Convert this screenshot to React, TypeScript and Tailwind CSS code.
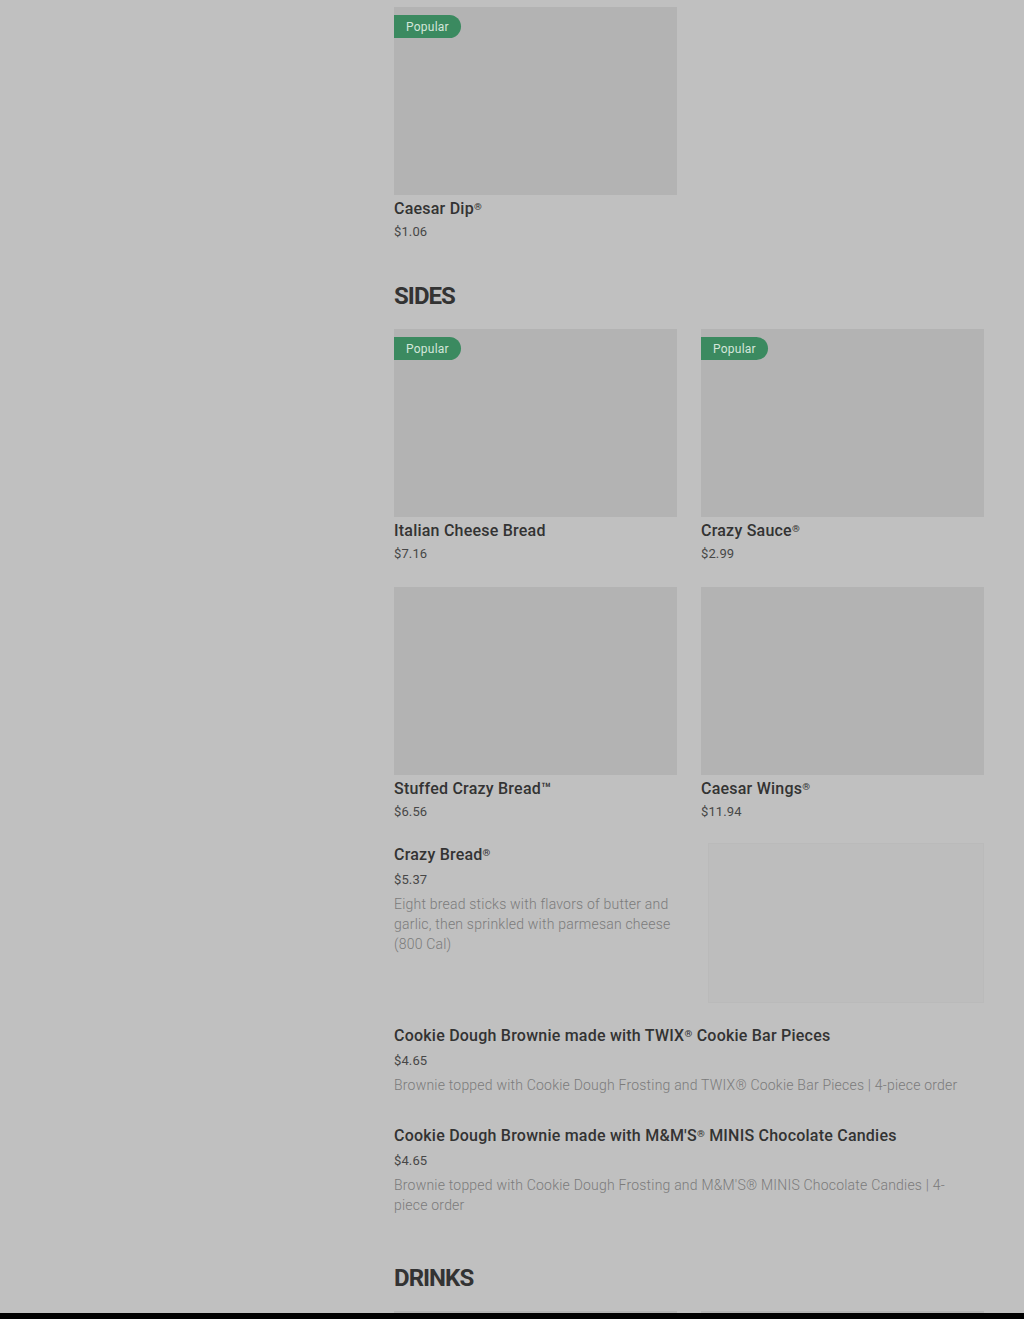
import React from "react";

type Card = { name: string; price: string; popular?: boolean };
type Row = { name: string; price: string; desc: string; image?: boolean };

const dips: Card[] = [{ name: "Caesar Dip®", price: "$1.06", popular: true }];

const sideCards: Card[] = [
  { name: "Italian Cheese Bread", price: "$7.16", popular: true },
  { name: "Crazy Sauce®", price: "$2.99", popular: true },
  { name: "Stuffed Crazy Bread™", price: "$6.56" },
  { name: "Caesar Wings®", price: "$11.94" },
];

const sideRows: Row[] = [
  {
    name: "Crazy Bread®",
    price: "$5.37",
    desc: "Eight bread sticks with flavors of butter and garlic, then sprinkled with parmesan cheese (800 Cal)",
    image: true,
  },
  {
    name: "Cookie Dough Brownie made with TWIX® Cookie Bar Pieces",
    price: "$4.65",
    desc: "Brownie topped with Cookie Dough Frosting and TWIX® Cookie Bar Pieces | 4-piece order",
  },
  {
    name: "Cookie Dough Brownie made with M&M'S® MINIS Chocolate Candies",
    price: "$4.65",
    desc: "Brownie topped with Cookie Dough Frosting and M&M'S® MINIS Chocolate Candies | 4-piece order",
  },
];

// small raised ® like the original site font
function Marked({ text }: { text: string }) {
  const parts = text.split("®");
  return (
    <>
      {parts.map((p, i) => (
        <React.Fragment key={i}>
          {p}
          {i < parts.length - 1 ? (
            <span className="relative -top-[0.45em] text-[0.62em] leading-none">®</span>
          ) : null}
        </React.Fragment>
      ))}
    </>
  );
}

function MenuCard({ item }: { item: Card }) {
  return (
    <div className="flex flex-col">
      <div className="relative h-[188px] w-full bg-[#b3b3b3]">
        {item.popular ? (
          <span className="absolute left-0 top-[8px] flex h-[23px] items-center rounded-r-full bg-[#3b8a60] pl-3 pr-[12px] text-[12px] tracking-[0.02em] text-[#d3e6da]">
            Popular
          </span>
        ) : null}
      </div>
      <div className="mt-[2px] text-[16px] font-medium leading-6 tracking-[0.014em] text-[#333333]">
        <Marked text={item.name} />
      </div>
      <div className="mt-[1px] text-[13px] leading-5 tracking-[0.01em] text-[#474747]">{item.price}</div>
    </div>
  );
}

function MenuRow({ item }: { item: Row }) {
  return (
    <div className="flex items-start gap-6">
      <div className={`min-w-0 flex-1 pb-2 ${item.image ? "" : "pr-5"}`}>
        <div className="text-[16px] font-medium leading-6 tracking-[0.014em] text-[#333333]">
          <Marked text={item.name} />
        </div>
        <div className="mt-[3px] text-[13px] leading-5 tracking-[0.01em] text-[#474747]">{item.price}</div>
        <p className="mt-1 text-[14px] font-light leading-5 tracking-[0.015em] text-[#7b7b7b]">{item.desc}</p>
      </div>
      {item.image ? (
        <div className="h-[160px] w-[276px] shrink-0 border border-[#bababa] bg-[#bdbdbd]" />
      ) : null}
    </div>
  );
}

function SectionTitle({ children }: { children: React.ReactNode }) {
  return (
    <h2 className="text-[24px] font-bold leading-8 tracking-[-0.04em] text-[#333333]">{children}</h2>
  );
}

export default function App() {
  return (
    <div
      className="flex h-[1319px] w-full flex-col overflow-hidden bg-[#c0c0c0]"
      style={{ fontFamily: "Roboto, 'Noto Sans', sans-serif" }}
    >
      <div className="flex min-h-0 flex-1 overflow-hidden">
        <aside className="w-[394px] shrink-0" />
        <main className="flex w-[590px] flex-col pt-[7px]">
          <div className="grid grid-cols-2 gap-x-6">
            {dips.map((d) => (
              <MenuCard key={d.name} item={d} />
            ))}
          </div>

          <section className="mt-[38px]">
            <SectionTitle>SIDES</SectionTitle>
            <div className="mt-[17px] grid grid-cols-2 gap-x-6 gap-y-[23px]">
              {sideCards.map((c) => (
                <MenuCard key={c.name} item={c} />
              ))}
            </div>
            <div className="mt-[21px] flex flex-col gap-[21px]">
              {sideRows.map((r) => (
                <MenuRow key={r.name} item={r} />
              ))}
            </div>
          </section>

          <section className="mt-[39px]">
            <SectionTitle>DRINKS</SectionTitle>
            <div className="mt-[17px] grid grid-cols-2 gap-x-6">
              <div className="h-[188px] bg-[#b3b3b3]" />
              <div className="h-[188px] bg-[#b3b3b3]" />
            </div>
          </section>
        </main>
      </div>
      <div className="h-[6px] shrink-0 bg-black" />
    </div>
  );
}
